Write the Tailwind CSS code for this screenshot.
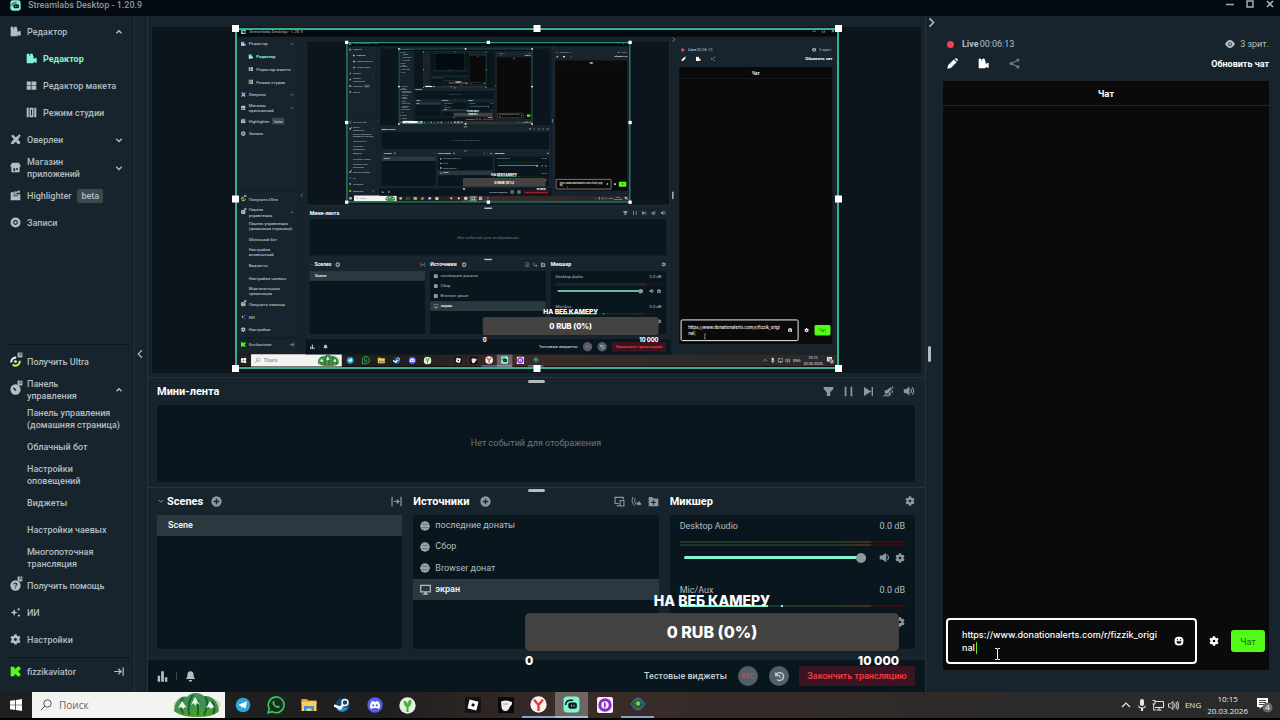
<!DOCTYPE html>
<html lang="ru">
<head>
<meta charset="utf-8">
<title>Streamlabs Desktop - 1.20.9</title>
<script src="https://cdn.jsdelivr.net/npm/@tailwindcss/browser@4"></script>
</head>
<body class="h-screen overflow-hidden bg-black font-['Roboto',sans-serif] text-[9px]">

<!-- Shared icons -->
<svg class="hidden" aria-hidden="true">
  <symbol id="i-logo" viewBox="0 0 16 16"><rect x=".5" y=".5" width="15" height="15" rx="3.5" fill="#80f5d2"/><rect x="5" y="6" width="8" height="6" rx="2" fill="#09161d"/><path d="M2.5 8.500a4.500 4.500 0 0 1 4-4.500h3" stroke="#09161d" stroke-width="1.300" fill="none"/><path d="M8 8.200v1.600M10.500 8.200v1.600" stroke="#80f5d2"/></symbol>
  <symbol id="i-editor" viewBox="0 0 16 16"><circle cx="3" cy="3" r="2.300"/><circle cx="8" cy="3" r="2.300"/><path d="M1 4h9a1 1 0 0 1 1 1v3.500L15.500 7v7.500L11 13v2H1z"/></symbol>
  <symbol id="i-layout" viewBox="0 0 16 16"><path d="M1 2h6v5.500H1zM8 2h7v5.500H8zM1 8.500h6V14H1zM8 8.500h7V14H8z"/></symbol>
  <symbol id="i-studio" viewBox="0 0 16 16"><path d="M1 1h3v14H1zM5.200 1h5.600v14H5.200zM12 1h3v14h-3zM7.300 3.500v9h1.400v-9z" fill-rule="evenodd"/></symbol>
  <symbol id="i-overlay" viewBox="0 0 16 16"><path d="M2.500 11 11 2.500 14 5.500 5.500 14 1 15zM1.500 2.500l3-1.500 4 4-2.500 3zM8.500 11.500 11.500 8l3.500 3.500-1 3-2.500.5z"/><circle cx="13.500" cy="2.500" r="1.700"/></symbol>
  <symbol id="i-store" viewBox="0 0 16 16"><path d="M3 1h10l2.500 4.500c0 1.200-.8 2-1.500 2.200V15H2V7.700C1.300 7.500.5 6.700.5 5.500zM5 9v4h2.500V9zm4 0v2.500h2.500V9z" fill-rule="evenodd"/></symbol>
  <symbol id="i-clap" viewBox="0 0 16 16"><path d="M1 3.500 14 .8l.7 3L4 6.200h11V15H1zM4 8v1.200h8V8z" fill-rule="evenodd"/><path d="m5 2.500 1.500 2.500M9.500 1.500 11 4" stroke="#17242d"/></symbol>
  <symbol id="i-rec" viewBox="0 0 16 16"><path d="M8 .7a7.300 7.300 0 1 0 0 14.600A7.300 7.300 0 0 0 8 .7M8 4.500a3.500 3.500 0 1 1 0 7 3.500 3.500 0 0 1 0-7" fill-rule="evenodd"/><circle cx="8" cy="8" r="1.800"/></symbol>
  <symbol id="i-ext" viewBox="0 0 10 10"><path d="M1 1h8v8H1z" fill="#b4bdc2"/><path d="M3 7l3.500-3.500M3.800 3h3.200v3.200" stroke="#17242d" fill="none"/></symbol>
  <symbol id="i-ultra" viewBox="0 0 16 16"><path d="M2 9.500A6 6 0 0 1 9 2.500" stroke="#e8eef0" stroke-width="3" fill="none"/><path d="M14 7a6 6 0 0 1-10 5.500" stroke="#d9ee3c" stroke-width="3" fill="none"/><circle cx="8" cy="8" r="2.200" fill="#80f5d2"/></symbol>
  <symbol id="i-dash" viewBox="0 0 16 16"><circle cx="8" cy="8" r="7.500"/><path d="m5 5.500 3.500 4" stroke="#17242d" stroke-width="2"/></symbol>
  <symbol id="i-help" viewBox="0 0 16 16"><circle cx="8" cy="8" r="7.500"/><path d="M5.500 6.500c0-3 5-2.500 4.500.2C9.700 8 8 8 8 9.500M8 11v1.500" stroke="#17242d" stroke-width="1.500" fill="none"/></symbol>
  <symbol id="i-ai" viewBox="0 0 16 16"><path d="M6 3l1.400 3.600L11 8 7.400 9.400 6 13 4.600 9.400 1 8l3.600-1.400z"/><circle cx="12.500" cy="3.500" r="1.600"/><circle cx="13" cy="12.500" r="1.600"/></symbol>
  <symbol id="i-gear" viewBox="0 0 16 16"><path d="M6.300.5h3.400l.4 2 1.500.9 2-.7 1.700 2.900L13.700 7v2l1.600 1.400-1.700 2.900-2-.7-1.500.8-.4 2H6.300l-.4-2-1.500-.8-2 .7L.7 10.400 2.300 9V7L.7 5.600l1.700-2.900 2 .7 1.500-.9zM8 5.900a2.100 2.100 0 1 0 0 4.200 2.100 2.100 0 0 0 0-4.200" fill-rule="evenodd"/></symbol>
  <symbol id="i-kick" viewBox="0 0 16 16"><path d="M1 1h5.500v3.500H8V3h2V1h5v5h-2v1.500h-1.500v1H13V10h2v5h-5v-2H8v-1.500H6.500V15H1z" fill="#53fc18"/></symbol>
  <symbol id="i-up" viewBox="0 0 16 16"><path d="m4 10 4-4 4 4" stroke="currentColor" stroke-width="2.300" fill="none"/></symbol>
  <symbol id="i-down" viewBox="0 0 16 16"><path d="m3.500 6 4.500 4.500L12.500 6" stroke="currentColor" stroke-width="2" fill="none"/></symbol>
  <symbol id="i-left" viewBox="0 0 16 16"><path d="M11 2 5 8l6 6" stroke="currentColor" stroke-width="1.800" fill="none"/></symbol>
  <symbol id="i-right" viewBox="0 0 16 16"><path d="m5 2 6 6-6 6" stroke="currentColor" stroke-width="2.200" fill="none"/></symbol>
  <symbol id="i-logout" viewBox="0 0 16 16"><path d="M1 8h9M7 4l4 4-4 4M14 2v12" stroke="currentColor" stroke-width="1.800" fill="none"/></symbol>
  <symbol id="i-filter" viewBox="0 0 16 16"><path d="M1 1.500h14v3L10.500 9v5.500h-5V9L1 4.500z"/></symbol>
  <symbol id="i-pause" viewBox="0 0 16 16"><path d="M2.500 1h2.500v14H2.500zM11 1h2.500v14H11z"/></symbol>
  <symbol id="i-next" viewBox="0 0 16 16"><path d="M1.500 1.500 12 8 1.500 14.500zM12.500 1.500h2v13h-2z"/></symbol>
  <symbol id="i-muted" viewBox="0 0 16 16"><path d="M2.500 6h3L11 1.500v13L5.500 10h-3z"/><path d="M13 6q1.500 2 0 4.500M2 14h7" stroke="currentColor" stroke-width="1.600" fill="none"/><path d="M2.500 15.500 15.500 2.500" stroke="#17242d" stroke-width="1.400"/><path d="M1 15 15 1" stroke="currentColor" stroke-width="1.600"/></symbol>
  <symbol id="i-vol" viewBox="0 0 16 16"><path d="M1 5.500h3L8.500 2v12L4 10.500H1z"/><path d="M10.200 5.200q2 2.800 0 5.600M12.300 3q3.800 5 0 10" stroke="currentColor" stroke-width="1.500" fill="none"/></symbol>
  <symbol id="i-vol1" viewBox="0 0 16 16"><path d="M1 5h3.500L10.500 1v14L4.500 11H1z"/><path d="M12 4q3.500 4 0 8" stroke="currentColor" stroke-width="1.600" fill="none"/></symbol>
  <symbol id="i-plus" viewBox="0 0 16 16"><path d="M8 .5a7.500 7.500 0 1 0 0 15 7.500 7.500 0 0 0 0-15M7 4h2v3h3v2H9v3H7V9H4V7h3z" fill-rule="evenodd"/></symbol>
  <symbol id="i-trans" viewBox="0 0 16 16"><path d="M1.500 1v14M14.500 1v14M4 8h7M8.500 5l3 3-3 3" stroke="currentColor" stroke-width="1.800" fill="none"/></symbol>
  <symbol id="i-devices" viewBox="0 0 16 16"><path d="M7 11H1.500V2h12v3M4 14h4M9 6.500h5.500v8H9z" stroke="currentColor" stroke-width="1.600" fill="none"/></symbol>
  <symbol id="i-wave" viewBox="0 0 16 16"><path d="M3 1.500Q-.5 8 5 14M6 3Q3.500 8 7.500 12.500" stroke="currentColor" stroke-width="1.400" fill="none"/><path d="m8 8 2.500 2 1-3 4 5-3 1.500-4-1z"/></symbol>
  <symbol id="i-folder" viewBox="0 0 16 16"><path d="M1 1.500h5l2 2h7V15H1zM7.200 6v2.500H4.700v1.600h2.500v2.500h1.600v-2.500h2.500V8.500H8.800V6z" fill-rule="evenodd"/></symbol>
  <symbol id="i-globe" viewBox="0 0 16 16"><circle cx="8" cy="8" r="7.500"/><path d="M1 5.500h14M1 10.500h14M8 .5v15M5.500 1Q3.500 8 5.500 15M10.500 1q2 7 0 14" stroke="#09161d" stroke-width=".5" fill="none"/></symbol>
  <symbol id="i-monitor" viewBox="0 0 16 16"><path d="M1 2h14v9.500H1z" stroke="currentColor" stroke-width="1.800" fill="none"/><path d="M6 12h4v2h2v1.500H4V14h2z"/></symbol>
  <symbol id="i-bars" viewBox="0 0 16 16"><path d="M1 7h3.500v8.500H1zM6 .5h4v15H6zM11.500 9H15v6.500h-3.500z"/></symbol>
  <symbol id="i-bell" viewBox="0 0 16 16"><path d="M8 .5c3.500 0 4.500 2.500 4.500 5.500 0 2 .7 3.500 2.500 5.500H1C2.800 9.500 3.500 8 3.500 6 3.500 3 4.500.5 8 .5M5.500 13h5a2.500 2.500 0 0 1-5 0"/></symbol>
  <symbol id="i-undo" viewBox="0 0 16 16"><path d="M2.500 2v4.500H7M3 6a5.700 5.700 0 1 1 1.500 6.300" stroke="currentColor" stroke-width="2" fill="none"/><path d="M8 5.500V9h3" stroke="currentColor" stroke-width="1.300" fill="none"/></symbol>
  <symbol id="i-pencil" viewBox="0 0 16 16"><path d="m.5 15.500 1-5 8.500-8.500L14 6l-8.500 8.500zM11 1l1.200-.7h1.500L15.700 2.300v1.500L15 5z"/></symbol>
  <symbol id="i-share" viewBox="0 0 16 16"><path d="M13 3 3.500 8l9.500 5" stroke="currentColor" stroke-width="1.600" fill="none"/><circle cx="13" cy="3" r="2.300"/><circle cx="3.500" cy="8" r="2.500"/><circle cx="13" cy="13" r="2.300"/></symbol>
  <symbol id="i-eye" viewBox="0 0 16 16"><path d="M0 8q8-12.500 16 0-8 12.500-16 0M8 5a3 3 0 1 0 0 6 3 3 0 0 0 0-6" fill-rule="evenodd"/><circle cx="8" cy="8" r="1.800"/></symbol>
  <symbol id="i-smile" viewBox="0 0 16 16"><rect x="1" y="1" width="14" height="14" rx="6"/><path d="M5.500 4.500v2.500M10.500 4.500v2.500" stroke="#0a0a0a" stroke-width="1.600"/><path d="M3.800 8.500h8.400q-.5 4-4.200 4t-4.200-4" fill="#0a0a0a"/></symbol>
</svg>

<div id="desktop" class="flex h-full w-full flex-col overflow-hidden bg-black leading-none text-[#b4bdc2]">
  <header class="flex h-4 shrink-0 items-start bg-[#030b10] pl-[10px]">
    <svg class="h-[11px] w-[11px]"><use href="#i-logo"/></svg>
    <h1 class="ml-[7px] flex-1 pt-px font-medium text-[#8d979d]">Streamlabs Desktop - 1.20.9</h1>
    <button aria-label="Свернуть" class="w-[20px] text-center"><svg class="mx-auto h-2 w-2" viewBox="0 0 8 8"><path d="M0 4.500h8" stroke="#a5adb1" stroke-width="1.500"/></svg></button>
    <button aria-label="Развернуть" class="w-[20px]"><svg class="mx-auto h-2 w-2" viewBox="0 0 8 8"><path d="M1 1h6v6H1z" stroke="#a5adb1" stroke-width="1.500" fill="none"/></svg></button>
    <button aria-label="Закрыть" class="w-[20px]"><svg class="mx-auto h-2 w-2" viewBox="0 0 8 8"><path d="m1 1 6 6M7 1 1 7" stroke="#a5adb1" stroke-width="1.600"/></svg></button>
  </header>

  <div class="flex min-h-0 flex-1">
    <!-- Navigation -->
    <nav class="flex w-[135px] shrink-0 flex-col border-r border-[#23323b] bg-[#17242d] fill-current pt-[2px] font-medium leading-[12px]">
      <a href="#" class="flex h-[27px] items-center pl-[10px]"><svg class="mr-[6px] h-[11px] w-[11px]"><use href="#i-editor"/></svg><span class="flex-1">Редактор</span><svg class="mr-[10px] h-[10px] w-[10px]"><use href="#i-up"/></svg></a>
      <a href="#" class="flex h-[27px] items-center pl-[26px] font-bold text-[#80f5d2]"><svg class="mr-[6px] h-[11px] w-[11px]"><use href="#i-editor"/></svg>Редактор</a>
      <a href="#" class="flex h-[27px] items-center pl-[26px]"><svg class="mr-[6px] h-[11px] w-[11px]"><use href="#i-layout"/></svg>Редактор макета</a>
      <a href="#" class="flex h-[27px] items-center pl-[26px]"><svg class="mr-[6px] h-[11px] w-[11px]"><use href="#i-studio"/></svg>Режим студии</a>
      <a href="#" class="flex h-[27px] items-center pl-[10px]"><svg class="mr-[6px] h-[11px] w-[11px]"><use href="#i-overlay"/></svg><span class="flex-1">Оверлеи</span><svg class="mr-[10px] h-[10px] w-[10px]"><use href="#i-down"/></svg></a>
      <a href="#" class="flex h-[29px] items-center pl-[10px]"><svg class="mr-[6px] h-[11px] w-[11px]"><use href="#i-store"/></svg><span class="flex-1">Магазин<br>приложений</span><svg class="mr-[10px] h-[10px] w-[10px]"><use href="#i-down"/></svg></a>
      <a href="#" class="flex h-[27px] items-center pl-[10px]"><svg class="mr-[6px] h-[11px] w-[11px]"><use href="#i-clap"/></svg>Highlighter<span class="ml-[6px] rounded-[2px] bg-[#3b4850] px-1 py-px">beta</span></a>
      <a href="#" class="flex h-[27px] items-center pl-[10px]"><svg class="mr-[6px] h-[11px] w-[11px]"><use href="#i-rec"/></svg>Записи</a>

      <div class="mr-[5px] mt-auto mb-[3px] ml-2 h-px shrink-0 bg-[#09161d]"></div>
      <a href="#" class="flex h-[27px] shrink-0 items-center pl-[10px]"><span class="relative mr-[6px]"><svg class="h-[11px] w-[11px]"><use href="#i-ultra"/></svg><svg class="absolute -top-[4px] left-[7px] h-[6px] w-[6px]"><use href="#i-ext"/></svg></span>Получить Ultra</a>
      <a href="#" class="flex h-[29px] shrink-0 items-center pl-[10px]"><span class="relative mr-[6px]"><svg class="h-[11px] w-[11px]"><use href="#i-dash"/></svg><svg class="absolute -top-[4px] left-[7px] h-[6px] w-[6px]"><use href="#i-ext"/></svg></span><span class="flex-1">Панель<br>управления</span><svg class="mr-[10px] h-[10px] w-[10px]"><use href="#i-up"/></svg></a>
      <a href="#" class="flex h-[29px] shrink-0 items-center pl-[27px]"><span>Панель управления<br>(домашняя страница)</span></a>
      <a href="#" class="flex h-[27px] shrink-0 items-center pl-[27px]">Облачный бот</a>
      <a href="#" class="flex h-[29px] shrink-0 items-center pl-[27px]"><span>Настройки<br>оповещений</span></a>
      <a href="#" class="flex h-[27px] shrink-0 items-center pl-[27px]">Виджеты</a>
      <a href="#" class="flex h-[27px] shrink-0 items-center pl-[27px]">Настройки чаевых</a>
      <a href="#" class="flex h-[29px] shrink-0 items-center pl-[27px]"><span>Многопоточная<br>трансляция</span></a>
      <a href="#" class="flex h-[27px] shrink-0 items-center pl-[10px]"><span class="relative mr-[6px]"><svg class="h-[11px] w-[11px]"><use href="#i-help"/></svg><svg class="absolute -top-[4px] left-[7px] h-[6px] w-[6px]"><use href="#i-ext"/></svg></span>Получить помощь</a>
      <a href="#" class="flex h-[27px] shrink-0 items-center pl-[10px]"><svg class="mr-[6px] h-[11px] w-[11px]"><use href="#i-ai"/></svg>ИИ</a>
      <a href="#" class="flex h-[27px] shrink-0 items-center pl-[10px]"><svg class="mr-[6px] h-[11px] w-[11px]"><use href="#i-gear"/></svg>Настройки</a>
      <div class="mr-[5px] mt-1 ml-2 h-px shrink-0 bg-[#09161d]"></div>
      <a href="#" class="mb-[7px] flex h-[27px] shrink-0 items-center pl-[10px]"><svg class="mr-[6px] h-[11px] w-[11px]"><use href="#i-kick"/></svg><span class="flex-1">fizzikaviator</span><svg class="mr-[9px] h-[11px] w-[12px]"><use href="#i-logout"/></svg></a>
    </nav>
    <div class="flex w-[13px] shrink-0 items-center border-r border-[#23323b] bg-[#17242d]">
      <button aria-label="Свернуть меню"><svg class="h-[10px] w-[10px]"><use href="#i-left"/></svg></button>
    </div>

    <main class="relative flex min-w-0 flex-1 flex-col border-r border-[#23323b] bg-[#17242d]">
      <!-- Scene canvas -->
      <section class="flex min-h-0 flex-1 flex-col pt-[11px]">
        <div class="mx-[4px] mb-[4px] flex flex-1 items-start justify-center bg-[#0c151b] pt-px">
          <div class="relative h-[341px] w-[604px]">
            <div data-screen class="absolute inset-px overflow-hidden bg-[#030b10]"></div>
            <div class="absolute inset-0 border-2 border-[#36b08c]"></div>
            <i class="absolute -top-[3px] -left-[3px] h-[7px] w-[7px] bg-white"></i>
            <i class="absolute -top-[3px] left-1/2 h-[7px] w-[7px] -translate-x-1/2 bg-white"></i>
            <i class="absolute -top-[3px] -right-[3px] h-[7px] w-[7px] bg-white"></i>
            <i class="absolute top-1/2 -left-[3px] h-[7px] w-[7px] -translate-y-1/2 bg-white"></i>
            <i class="absolute top-1/2 -right-[3px] h-[7px] w-[7px] -translate-y-1/2 bg-white"></i>
            <i class="absolute -bottom-[3px] -left-[3px] h-[7px] w-[7px] bg-white"></i>
            <i class="absolute -bottom-[3px] left-1/2 h-[7px] w-[7px] -translate-x-1/2 bg-white"></i>
            <i class="absolute -right-[3px] -bottom-[3px] h-[7px] w-[7px] bg-white"></i>
          </div>
        </div>
      </section>

      <!-- Mini feed -->
      <section class="h-[110px] shrink-0 border-t border-[#23323b] pr-[10px] pl-[9px]">
        <div class="mx-auto mt-[2px] h-[3px] w-[17px] rounded-full bg-[#b4bdc2]"></div>
        <div class="flex h-[22px] items-center justify-between pb-[6px]">
          <h2 class="text-[11px] font-bold text-white">Мини-лента</h2>
          <div class="flex gap-[9px] fill-current text-[#8d979d]">
            <button aria-label="Фильтр"><svg class="h-[11px] w-[11px]"><use href="#i-filter"/></svg></button>
            <button aria-label="Пауза"><svg class="h-[11px] w-[11px]"><use href="#i-pause"/></svg></button>
            <button aria-label="Пропустить"><svg class="h-[11px] w-[11px]"><use href="#i-next"/></svg></button>
            <button aria-label="Без звука"><svg class="h-[11px] w-[11px]"><use href="#i-muted"/></svg></button>
            <button aria-label="Громкость"><svg class="h-[12px] w-[12px]"><use href="#i-vol"/></svg></button>
          </div>
        </div>
        <div class="flex h-[77px] items-center justify-center rounded-[2px] bg-[#09161d] text-[#6d777d]">Нет событий для отображения</div>
      </section>

      <!-- Scenes, sources, mixer -->
      <section class="h-[173px] shrink-0 border-t border-[#23323b] pr-[10px] pl-[9px]">
        <div class="mx-auto mt-px h-[3px] w-[17px] rounded-full bg-[#b4bdc2]"></div>
        <div class="grid grid-cols-3 gap-[11px]">
          <div>
            <div class="flex h-[23px] items-center fill-current pb-[5px] text-[#8d979d]">
              <svg class="h-2 w-2"><use href="#i-down"/></svg>
              <h2 class="ml-[2px] text-[11px] font-bold text-white">Scenes</h2>
              <button aria-label="Добавить сцену" class="ml-[8px]"><svg class="h-[11px] w-[11px]"><use href="#i-plus"/></svg></button>
              <button aria-label="Переходы" class="ml-auto"><svg class="h-[11px] w-[11px]"><use href="#i-trans"/></svg></button>
            </div>
            <ul class="h-[134px] rounded-[2px] bg-[#09161d]">
              <li class="flex h-[21px] items-center bg-[#2b383f] pl-[11px] font-medium text-white">Scene</li>
            </ul>
          </div>
          <div>
            <div class="flex h-[23px] items-center gap-[6px] fill-current pb-[5px] text-[#8d979d]">
              <h2 class="text-[11px] font-bold text-white">Источники</h2>
              <button aria-label="Добавить источник" class="ml-[5px]"><svg class="h-[11px] w-[11px]"><use href="#i-plus"/></svg></button>
              <button aria-label="Двойной вывод" class="ml-auto"><svg class="h-[11px] w-[11px]"><use href="#i-devices"/></svg></button>
              <button aria-label="Аудио"><svg class="h-[11px] w-[11px]"><use href="#i-wave"/></svg></button>
              <button aria-label="Добавить папку"><svg class="h-[11px] w-[11px]"><use href="#i-folder"/></svg></button>
            </div>
            <ul class="h-[134px] rounded-[2px] bg-[#09161d] fill-current">
              <li class="flex h-[21px] items-center gap-[5px] pl-[7px]"><svg class="h-[10px] w-[10px]"><use href="#i-globe"/></svg>последние донаты</li>
              <li class="flex h-[21px] items-center gap-[5px] pl-[7px]"><svg class="h-[10px] w-[10px]"><use href="#i-globe"/></svg>Сбор</li>
              <li class="flex h-[22px] items-center gap-[5px] pl-[7px]"><svg class="h-[10px] w-[10px]"><use href="#i-globe"/></svg>Browser донат</li>
              <li class="flex h-[21px] items-center gap-[4px] bg-[#2b383f] pl-[7px] font-medium text-white"><svg class="h-[11px] w-[11px] text-[#b4bdc2]"><use href="#i-monitor"/></svg>экран</li>
            </ul>
          </div>
          <div>
            <div class="flex h-[23px] items-center justify-between fill-current pb-[5px] text-[#8d979d]">
              <h2 class="text-[11px] font-bold text-white">Микшер</h2>
              <button aria-label="Настройки микшера"><svg class="h-[10px] w-[10px]"><use href="#i-gear"/></svg></button>
            </div>
            <div class="h-[134px] overflow-hidden rounded-[2px] bg-[#09161d] px-[10px] fill-current">
              <div class="h-[64px] pt-[7px]">
                <div class="flex justify-between"><span>Desktop Audio</span><span>0.0 dB</span></div>
                <div class="mt-[10px] h-[2px] bg-linear-to-r from-[#1d3627] from-68% via-[#40301a] via-68% via-85% to-[#330f16] to-85%"></div>
                <div class="mt-px h-[2px] bg-linear-to-r from-[#1d3627] from-68% via-[#40301a] via-68% via-85% to-[#330f16] to-85%"></div>
                <div class="mt-[6px] flex items-center text-[#8d979d]">
                  <div class="relative ml-[4px] flex h-[11px] flex-1 items-center"><div class="h-[3px] w-full rounded-full bg-[#80f5d2]"></div>
                    <input type="range" aria-label="Громкость Desktop Audio" value="100" class="absolute inset-0 m-0 h-full w-full opacity-0"><i class="absolute right-0 h-[10px] w-[10px] rounded-full bg-[#8d979d]"></i></div>
                  <button aria-label="Выключить звук" class="ml-[13px]"><svg class="h-[11px] w-[11px]"><use href="#i-vol1"/></svg></button>
                  <button aria-label="Настройки Desktop Audio" class="ml-[5px]"><svg class="h-[10px] w-[10px]"><use href="#i-gear"/></svg></button>
                </div>
              </div>
              <div class="h-[64px] pt-[7px]">
                <div class="flex justify-between"><span>Mic/Aux</span><span>0.0 dB</span></div>
                <div class="mt-[10px] flex h-[2px] bg-linear-to-r from-[#1d3627] from-68% via-[#40301a] via-68% via-85% to-[#330f16] to-85%"><i class="w-[39%] bg-[#80f5d2]"></i><i class="ml-[13px] w-[2px] bg-[#80f5d2]"></i></div>
                <div class="mt-[9px] flex items-center text-[#8d979d]">
                  <div class="relative ml-[4px] flex h-[11px] flex-1 items-center"><div class="h-[3px] w-full rounded-full bg-[#80f5d2]"></div>
                    <input type="range" aria-label="Громкость Mic/Aux" value="100" class="absolute inset-0 m-0 h-full w-full opacity-0"><i class="absolute right-0 h-[10px] w-[10px] rounded-full bg-[#8d979d]"></i></div>
                  <button aria-label="Выключить микрофон" class="ml-[13px]"><svg class="h-[11px] w-[11px]"><use href="#i-vol1"/></svg></button>
                  <button aria-label="Настройки Mic/Aux" class="ml-[5px]"><svg class="h-[10px] w-[10px]"><use href="#i-gear"/></svg></button>
                </div>
              </div>
            </div>
          </div>
        </div>
      </section>

      <!-- Status bar -->
      <footer class="flex h-[32px] shrink-0 items-center bg-[#09161d] fill-current pr-[10px] pl-[9px]">
        <button aria-label="Статистика"><svg class="h-[11px] w-[11px]"><use href="#i-bars"/></svg></button>
        <span class="mx-[8px] h-[8px] w-px bg-[#3b4850]"></span>
        <button aria-label="Уведомления"><svg class="h-[11px] w-[11px]"><use href="#i-bell"/></svg></button>
        <button class="ml-auto font-medium text-[#c6ced2]">Тестовые виджеты</button>
        <button class="ml-[11px] h-5 w-5 rounded-full bg-[#4f5e67] text-[7px] font-medium text-[#e8394a]">REC</button>
        <button aria-label="Повтор" class="ml-[11px] flex h-5 w-5 items-center justify-center rounded-full bg-[#4f5e67] text-[#c6ced2]"><svg class="h-[11px] w-[11px]"><use href="#i-undo"/></svg></button>
        <button class="ml-[10px] h-5 w-[116px] rounded-[2px] bg-[#3a1420] font-medium text-[#fa3b45]">Закончить трансляцию</button>
      </footer>

      <!-- Donation goal laid over the window -->
      <div class="absolute right-[26px] bottom-[25px] w-[374px] font-['Inter',sans-serif] font-extrabold text-white">
        <div class="pb-[5px] text-center text-[14px]">НА ВЕБ КАМЕРУ</div>
        <div class="flex h-[38px] items-center justify-center rounded-[5px] bg-[#444342] text-[16px]">0 RUB (0%)</div>
        <div class="flex justify-between pt-[4px] text-[12px]"><span>0</span><span>10 000</span></div>
      </div>
    </main>

    <!-- Live chat -->
    <aside class="flex w-[354px] shrink-0 bg-[#17242d]">
      <div class="relative w-[17px] pt-px">
        <button aria-label="Свернуть чат"><svg class="h-[11px] w-[11px]"><use href="#i-right"/></svg></button>
        <div class="absolute top-[330px] left-[2px] h-[16px] w-[3px] rounded-full bg-[#b4bdc2]"></div>
      </div>
      <div class="mr-[11px] mb-[22px] flex flex-1 flex-col pt-[20px]">
        <div class="flex h-4 items-center pl-[4px] fill-current">
          <i class="mr-[8px] h-[7px] w-[7px] rounded-full bg-[#f0424c]"></i><b class="font-bold">Live</b><span class="ml-px">00:06:13</span>
          <svg class="mr-[5px] ml-auto h-[10px] w-[10px]"><use href="#i-eye"/></svg><span>3 зрит.</span>
        </div>
        <div class="flex h-[29px] items-start gap-[20px] pt-[6px] pl-[4px] fill-current text-white">
          <button aria-label="Редактировать"><svg class="h-[11px] w-[11px]"><use href="#i-pencil"/></svg></button>
          <button aria-label="Камера"><svg class="h-[11px] w-[11px]"><use href="#i-editor"/></svg></button>
          <button aria-label="Поделиться" class="text-[#6d777d]"><svg class="h-[11px] w-[11px]"><use href="#i-share"/></svg></button>
          <button class="ml-auto pt-[2px] font-bold">Обновить чат</button>
        </div>
        <div class="flex flex-1 flex-col bg-[#0a0a0a] font-['Inter',sans-serif]">
          <h2 class="flex h-[25px] items-center justify-center border-b border-[#252829] font-bold text-white">Чат</h2>
          <form class="mt-auto mb-[6px] flex items-center gap-[12px] pr-[4px] pl-[3px]">
            <div class="relative flex h-[46px] flex-1 items-center rounded-[4px] border-2 border-white pl-[14px] fill-white">
              <textarea aria-label="Сообщение" rows="2" spellcheck="false" class="block w-[198px] resize-none overflow-hidden break-all bg-transparent text-[9px] leading-[13px] font-medium text-white outline-none">https://www.donationalerts.com/r/fizzik_original</textarea>
              <i class="absolute bottom-[8px] left-[28px] h-[12px] w-px bg-[#53fc18]"></i>
              <svg class="absolute right-[11px] h-[10px] w-[10px]"><use href="#i-smile"/></svg>
              <svg class="absolute bottom-[2px] left-[46px] h-[12px] w-[7px]" viewBox="0 0 7 12"><path d="M1 .5h2l.5.5.5-.5h2M3.500 1v10M1 11.500h2l.5-.5.5.5h2" stroke="#fff" fill="none"/></svg>
            </div>
            <button type="button" aria-label="Настройки чата"><svg class="h-[10px] w-[10px] fill-white"><use href="#i-gear"/></svg></button>
            <button type="button" class="h-[22px] w-[34px] rounded-[3px] bg-[#53fc18] text-[9px] text-[#1c6b0a]">Чат</button>
          </form>
        </div>
      </div>
    </aside>
  </div>

  <!-- Windows taskbar -->
  <footer class="mb-[2px] flex h-[26px] shrink-0 items-center bg-linear-to-r from-[#1f1f20] from-30% via-[#3b2b27] via-45% to-[#2b2a2a] to-80% font-['Open_Sans',sans-serif] text-[#e8e8e8]">
    <button aria-label="Пуск" class="w-8"><svg class="mx-auto h-3 w-3" viewBox="0 0 12 12"><path d="M0 1.800 5.300 1v4.700H0zM6 .9 12 0v5.700H6zM0 6.300h5.300V11L0 10.200zM6 6.300h6V12l-6-.9z" fill="#fff"/></svg></button>
    <label class="flex h-[26px] w-[193px] items-center bg-[#f3f3f2]">
      <svg class="ml-[8px] h-3 w-3" viewBox="0 0 12 12"><circle cx="7.500" cy="4.500" r="3.700" stroke="#555" fill="none"/><path d="M4.800 7.200.8 11.200" stroke="#555"/></svg>
      <input type="search" aria-label="Поиск" placeholder="Поиск" class="ml-[7px] w-[112px] bg-transparent text-[10px] placeholder:text-[#666] outline-none">
      <svg class="ml-[2px] h-[26px] w-[48px]" viewBox="0 0 48 26"><ellipse cx="24" cy="13" rx="23.500" ry="9" fill="#c9dba0"/><path d="M1 19C2 7 9 3 14 5c4-5 12-5 17-1 7-1 14 4 15 15-6 7-38 7-45 0" fill="#3f9150"/><path d="M3 20q20-7 42 0-5 5-21 5T3 20" fill="#4a9b2e"/><path d="M16 23Q14 10 20 3M25 23V8M31 23Q37 10 32 5M10 22Q6 12 10 6M40 22q4-8-2-13" stroke="#195c38" stroke-width="1.800" fill="none"/><path d="m9 9-4 7 3-1 2 2 2-2 2 1zM22 5l-4 8 3-2 1 3 2-3 3 2zM37 9l-4 7 3-1 2 2 2-2 2 1z" fill="#eaf5ea"/></svg>
    </label>
    <div class="ml-px flex h-full flex-1 [&>button]:flex [&>button]:w-[33px] [&>button]:items-center [&>button]:justify-center">
      <button aria-label="Telegram"><svg class="h-4 w-4" viewBox="0 0 16 16"><circle cx="8" cy="8" r="7.300" fill="#2fa3da"/><path d="m3 8 9-3.700-1.500 7.500-2.500-1.800-1.400 1.300-.4-2.300z" fill="#fff"/></svg></button>
      <button aria-label="WhatsApp"><svg class="h-[18px] w-[18px]" viewBox="0 0 16 16"><path d="m1 15 1-3.800A7 7 0 1 1 4.800 14z" fill="#1d2a20" stroke="#35c65b" stroke-width="1.500"/><path d="M5.300 4.500c1-.8 1.500.6 1.700 1.300l-.6.9c.5 1.200 1.400 2 2.600 2.500l.9-.8c1.500.5 2 1 .9 2C8 12 3.500 7.500 5.300 4.500" fill="#35c65b"/></svg></button>
      <button aria-label="Проводник"><svg class="h-4 w-4" viewBox="0 0 16 16"><path d="M.5 2h5.500l1 1.500h8.500V7H.5z" fill="#dba23a"/><path d="M.5 4.500h15V14H.5z" fill="#f7cf5b"/><path d="M3 9h10v5h-2.500v-2.500h-5V14H3z" fill="#4a8fc9"/></svg></button>
      <button aria-label="Steam"><svg class="h-4 w-4" viewBox="0 0 16 16"><circle cx="8.500" cy="8" r="7" fill="#16486f"/><path d="M2 12q6 6 12-1l-5-1z" fill="#2a8fc0"/><circle cx="11" cy="5.500" r="3" fill="none" stroke="#fff" stroke-width="1.400"/><path d="M0 8.500 6 11l3-3" stroke="#fff" stroke-width="2.500" fill="none"/><circle cx="6" cy="11" r="1.800" fill="#fff"/></svg></button>
      <button aria-label="Discord"><svg class="h-4 w-4" viewBox="0 0 16 16"><circle cx="8" cy="8" r="7.700" fill="#5560e6"/><path d="M4.500 4.500 6.500 4l.5.800h2l.5-.8 2 .5Q13.500 8 13 11l-2 1-.8-1H5.800L5 12l-2-1q-.5-3 1.500-6.500" fill="#fff"/><circle cx="6.200" cy="8.300" r="1.100" fill="#5560e6"/><circle cx="9.800" cy="8.300" r="1.100" fill="#5560e6"/></svg></button>
      <button aria-label="VPN"><svg class="h-[17px] w-[17px]" viewBox="0 0 16 16"><circle cx="8" cy="8" r="7.700" fill="#e4efe2"/><path d="M4.500 3.500q3.500 0 3.500 4 0-5 3.500-5 1 5-2.500 7v4.500H7V9.500q-3-2-2.500-6" fill="#4fae3c"/></svg></button>
      <span class="w-[32px]"></span>
      <button aria-label="Roblox"><svg class="h-4 w-4" viewBox="0 0 16 16"><rect width="16" height="16" rx="2" fill="#151312"/><path d="m4.500 2.500 9 2.300-2.200 8.800-8.800-2.300zM7 6.300 6.300 9l2.800.7.700-2.700z" fill="#fff" fill-rule="evenodd"/></svg></button>
      <button aria-label="Игра"><svg class="h-4 w-4" viewBox="0 0 16 16"><path fill="#0a0909" d="M0 0h16v16H0z"/><path d="M3 4.500q5-2 9 0l2 .5q.5 3-2 4.500-1.500 4.500-4.500 4.500-3.500 0-4-4z" fill="#eee"/><path d="M5 7h5" stroke="#777" stroke-width=".7"/></svg></button>
      <button aria-label="Яндекс Браузер" class="border-b-2 border-[#7ea5d0]"><svg class="h-[17px] w-[17px]" viewBox="0 0 16 16"><circle cx="8" cy="8" r="7.700" fill="#f7f2f0"/><path d="m3.800 3.500 4.200 5M12.200 3.500 8 8.500V14" stroke="#e03a2f" stroke-width="2.200" fill="none"/></svg></button>
      <button aria-label="Streamlabs" class="border-b-2 border-[#9dbfe3] bg-[#6f6663]"><svg class="h-[17px] w-[17px]"><use href="#i-logo"/></svg></button>
      <button aria-label="Плеер"><svg class="h-4 w-4" viewBox="0 0 16 16"><rect width="16" height="16" rx="2" fill="#f5effa"/><circle cx="8" cy="8" r="5.200" fill="none" stroke="#8d2bc4" stroke-width="3"/><path d="M7 4.500q4 3.500 0 7z" fill="#8d2bc4"/></svg></button>
      <button aria-label="Камера" class="border-b-2 border-[#7ea5d0]"><svg class="h-4 w-4" viewBox="0 0 16 16"><path d="M1 8q7-12 14 0-7 12-14 0" fill="#1b3a40" stroke="#2c8c93"/><circle cx="8" cy="8" r="4.300" fill="#24483a" stroke="#38858a"/><circle cx="8" cy="7.500" r="2.300" fill="#8bc63a"/></svg></button>
    </div>
    <div class="flex items-center fill-current text-[8px]">
      <svg class="mr-[6px] h-[10px] w-[10px]" viewBox="0 0 10 10"><path d="m1 7 4-4 4 4" stroke="currentColor" stroke-width="1.200" fill="none"/></svg>
      <svg class="mr-[5px] h-[12px] w-[10px]" viewBox="0 0 10 12"><rect x="3" width="4" height="7" rx="2"/><path d="M1.500 4.500q0 4 3.500 4t3.500-4v4L6 9.500V12H4V9.500L1.500 8.500z"/></svg>
      <svg class="mr-[4px] h-[11px] w-[12px]" viewBox="0 0 12 11"><path d="M3 1.500h8.500v6H3M7 7.500V10M4.500 10h5M.5.500h2.500v3.500H.5M1.700 4v6h2" stroke="currentColor" fill="none"/></svg>
      <svg class="mr-[6px] h-[11px] w-[11px]" viewBox="0 0 11 11"><path d="M.5 3.800h2L5 1.500v8L2.500 7.200h-2zM6.500 3.500q1.300 2 0 4M8 2.200q2.200 3.300 0 6.600M9.500 1q2.500 4.500 0 9" stroke="currentColor" stroke-width=".9" fill="none"/></svg>
      <span>ENG</span>
      <time class="ml-[6px] text-center leading-[12px]">10:15<br>20.03.2026</time>
      <svg class="mr-[7px] ml-[9px] h-[16px] w-[16px]" viewBox="0 0 16 16"><path d="M0 1h11v9H4.500L2.500 12v-2H0z" fill="#fff"/><path d="M2 3.500h7M2 5.500h7M2 7.500h5" stroke="#444"/><circle cx="10.500" cy="10.500" r="5" fill="#6b6b6b"/><text x="10.500" y="13.300" text-anchor="middle" font-size="8" fill="#fff">4</text></svg>
    </div>
  </footer>
</div>

<script>
  // The captured screen contains the application itself, so the preview repeats it.
  const desktop = document.getElementById('desktop');
  const pristine = desktop.cloneNode(true);
  pristine.removeAttribute('id');
  let slot = desktop.querySelector('[data-screen]');
  for (let depth = 0; depth < 4; depth++) {
    const frame = document.createElement('div');
    frame.className = 'h-[720px] w-[1280px] origin-top-left scale-[0.47]';
    frame.inert = true;
    const copy = pristine.cloneNode(true);
    frame.append(copy);
    slot.append(frame);
    slot = copy.querySelector('[data-screen]');
  }
</script>
</body>
</html>
